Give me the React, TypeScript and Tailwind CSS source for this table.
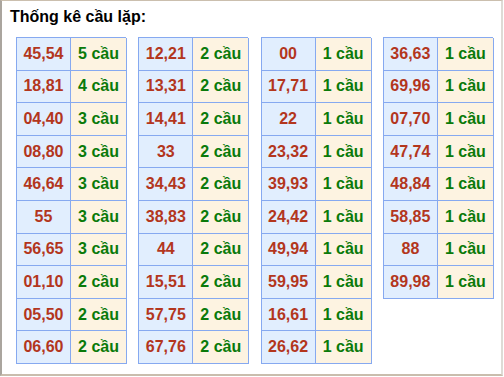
import React from 'react';

const columns: [string, number][][] = [
  [
    ['45,54', 5], ['18,81', 4], ['04,40', 3], ['08,80', 3], ['46,64', 3],
    ['55', 3], ['56,65', 3], ['01,10', 2], ['05,50', 2], ['06,60', 2],
  ],
  [
    ['12,21', 2], ['13,31', 2], ['14,41', 2], ['33', 2], ['34,43', 2],
    ['38,83', 2], ['44', 2], ['15,51', 2], ['57,75', 2], ['67,76', 2],
  ],
  [
    ['00', 1], ['17,71', 1], ['22', 1], ['23,32', 1], ['39,93', 1],
    ['24,42', 1], ['49,94', 1], ['59,95', 1], ['16,61', 1], ['26,62', 1],
  ],
  [
    ['36,63', 1], ['69,96', 1], ['07,70', 1], ['47,74', 1], ['48,84', 1],
    ['58,85', 1], ['88', 1], ['89,98', 1],
  ],
];

const CauTable: React.FC<{ rows: [string, number][] }> = ({ rows }) => (
  <div className="grid w-[110px] grid-cols-[54px_56px] border-t border-l border-[#86a9f0]">
    {rows.map(([pair, n]) => (
      <React.Fragment key={pair}>
        <div className="flex h-[32.6px] items-center justify-center border-r border-b border-[#86a9f0] bg-[#e1eefe] text-[#b3361d]">
          {pair}
        </div>
        <div className="flex h-[32.6px] items-center justify-center border-r border-b border-[#86a9f0] bg-[#fdf3e1] text-[#0a7a0a]">
          {n} cầu
        </div>
      </React.Fragment>
    ))}
  </div>
);

export default function App() {
  return (
    <div className="h-[377px] w-[504px] bg-white">
      <div
        className="h-[376px] w-[503px] border-t border-r-2 border-b-2 border-l-2 border-t-[#cbbfae] border-r-[#dedbd6] border-b-[#c9bdad] border-l-[#aaa59e] font-bold"
        style={{ fontFamily: '"Liberation Sans", Arial, sans-serif' }}
      >
        <div className="pt-[6px] pl-[8px] text-[16px] leading-[19px] text-black">Thống kê cầu lặp:</div>
        <div className="mt-[11px] flex items-start gap-[12.3px] pl-[14px] text-[16px]">
          {columns.map((rows, i) => (
            <CauTable key={i} rows={rows} />
          ))}
        </div>
      </div>
    </div>
  );
}
